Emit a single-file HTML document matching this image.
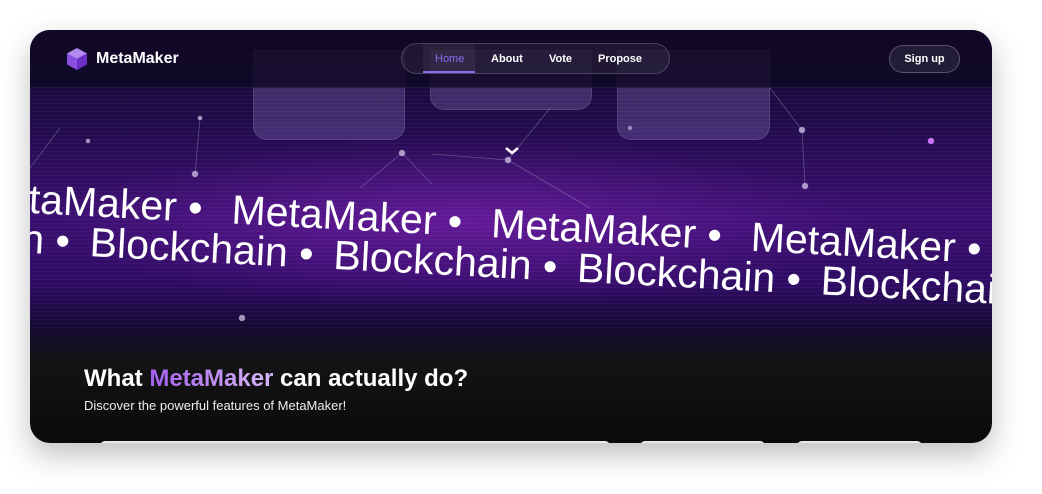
<!DOCTYPE html>
<html><head><style>
*{margin:0;padding:0;box-sizing:border-box}
body{width:1042px;height:494px;background:#fff;font-family:"Liberation Sans",sans-serif;position:relative;overflow:hidden}
.card{position:absolute;left:30px;top:30px;width:962px;height:413px;border-radius:20px;overflow:hidden;box-shadow:0 12px 30px rgba(0,0,0,.25);
background:linear-gradient(180deg,#140a2e 0%,#1e0c45 20%,#3a1070 45%,#2e0c62 62%,#140a30 72%,#141416 80%,#0a0a0a 100%)}
.glow{position:absolute;left:0;top:60px;width:962px;height:240px;background:radial-gradient(ellipse 60% 50% at 45% 55%,rgba(150,40,200,.45),transparent 70%)}
.grid{position:absolute;left:0;top:58px;width:962px;height:240px;background:repeating-linear-gradient(0deg,rgba(180,80,255,.08) 0 1px,transparent 1px 4px);}
.hdr{position:absolute;left:0;top:0;width:962px;height:58px;background:rgba(16,9,36,.82);border-bottom:1px solid rgba(255,255,255,.08)}
.glass{position:absolute;background:rgba(130,110,180,.35);border:1px solid rgba(255,255,255,.1);border-radius:0 0 14px 14px}
.row{position:absolute;left:0;height:50px;width:1400px;transform:rotate(3deg);transform-origin:0 50%;white-space:nowrap;color:#fff;font-size:41px;line-height:50px}
.row span{position:absolute;top:0}
.nav{position:absolute;left:371px;top:13px;width:269px;height:31px;border:1px solid rgba(255,255,255,.18);border-radius:16px;background:rgba(255,255,255,.06);font-size:11px;font-weight:bold;color:#fff}
.nav span{position:absolute;top:9px}
</style></head><body>
<div class="card">
<div class="glow"></div><div class="grid"></div>
<svg style="position:absolute;left:0;top:58px" width="962" height="260" stroke="rgba(200,190,230,.35)" fill="rgba(220,210,240,.7)" stroke-width=".8">
<line x1="170" y1="30" x2="165" y2="86"/><line x1="372" y1="65" x2="402" y2="96"/><line x1="402" y1="66" x2="478" y2="72"/><line x1="478" y1="72" x2="520" y2="20"/><line x1="372" y1="65" x2="330" y2="100"/><line x1="740" y1="0" x2="772" y2="42"/><line x1="772" y1="42" x2="775" y2="98"/><line x1="478" y1="72" x2="560" y2="120"/><line x1="0" y1="80" x2="30" y2="40"/>
<circle cx="170" cy="30" r="2"/><circle cx="165" cy="86" r="3"/><circle cx="372" cy="65" r="3"/><circle cx="478" cy="72" r="3"/><circle cx="772" cy="42" r="3"/><circle cx="775" cy="98" r="3"/><circle cx="212" cy="230" r="3"/><circle cx="58" cy="53" r="2"/><circle cx="600" cy="40" r="2"/>
<circle cx="901" cy="53" r="3" fill="#d070ff"/>
</svg>
<div class="glass" style="left:223px;top:20px;width:152px;height:90px"></div>
<div class="glass" style="left:400px;top:20px;width:162px;height:60px"></div>
<div class="glass" style="left:587px;top:20px;width:153px;height:90px"></div>
<svg style="position:absolute;left:474px;top:116px" width="16" height="10"><path d="M2 2 L8 7 L14 2" stroke="#fff" stroke-width="2.5" fill="none"/></svg>
<div class="row" style="top:144px"><span style="left:-58px">MetaMaker •</span><span style="left:202px">MetaMaker •</span><span style="left:462px">MetaMaker •</span><span style="left:722px">MetaMaker •</span><span style="left:982px">MetaMaker •</span></div>
<div class="row" style="top:184px"><span style="left:-184px">Blockchain •</span><span style="left:60px">Blockchain •</span><span style="left:304px">Blockchain •</span><span style="left:548px">Blockchain •</span><span style="left:792px">Blockchain •</span></div>
<div class="hdr">
<svg style="position:absolute;left:36px;top:17px" width="22" height="24" viewBox="0 0 22 24"><path d="M11 1 L21 6.5 L11 12 L1 6.5Z" fill="#b38af0"/><path d="M1 6.5 L11 12 L11 23 L1 17.5Z" fill="#8a4fe0"/><path d="M21 6.5 L11 12 L11 23 L21 17.5Z" fill="#6b2fc8"/></svg>
<div style="position:absolute;left:66px;top:20px;color:#fff;font-weight:bold;font-size:16px">MetaMaker</div>
<div class="nav"><div style="position:absolute;left:21px;top:0;width:52px;height:29px;border-bottom:2px solid #8b6cf0;background:rgba(255,255,255,.05)"></div><span style="left:33px;color:#8b6cf0;font-weight:normal">Home</span><span style="left:89px">About</span><span style="left:147px">Vote</span><span style="left:196px">Propose</span></div>
<div style="position:absolute;left:859px;top:15px;width:71px;height:28px;border:1px solid rgba(255,255,255,.25);border-radius:14px;background:rgba(255,255,255,.08);color:#fff;font-size:11px;font-weight:bold;text-align:center;line-height:26px">Sign up</div>
</div>
<div style="position:absolute;left:54px;top:335px;font-size:24px;font-weight:bold;color:#fff">What <span style="background:linear-gradient(90deg,#a35ef0,#d9b8f5);-webkit-background-clip:text;color:transparent">MetaMaker</span> can actually do?</div>
<div style="position:absolute;left:54px;top:368px;font-size:13px;color:#eee">Discover the powerful features of MetaMaker!</div>
<div style="position:absolute;left:70px;top:411px;width:510px;height:10px;background:#e8e8ee;border-radius:10px"></div>
<div style="position:absolute;left:610px;top:411px;width:125px;height:10px;background:#e8e8ee;border-radius:10px"></div>
<div style="position:absolute;left:767px;top:411px;width:125px;height:10px;background:#e8e8ee;border-radius:10px"></div>
</div>
</body></html>
